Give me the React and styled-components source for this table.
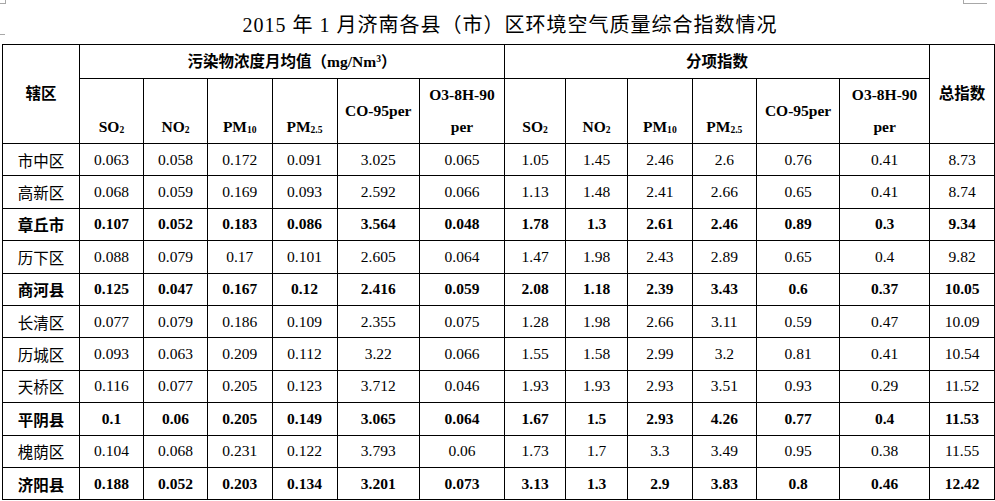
import styled, { createGlobalStyle } from "styled-components";

const GlobalStyle = createGlobalStyle`
  html, body {
    margin: 0;
    padding: 0;
    background: #fff;
  }
`;

const Page = styled.div`
  position: relative;
  width: 995px;
  height: 501px;
  padding-left: 2px;
  box-sizing: border-box;
  font-family: "Liberation Serif", "Noto Sans CJK SC", serif;
  color: #000;
`;

const CornerMark = styled.div`
  position: absolute;
  top: ${(p) => p.$top}px;
  left: ${(p) => p.$left}px;
  width: ${(p) => p.$w}px;
  height: ${(p) => p.$h}px;
  border-color: #a8a8a8;
  border-style: solid;
  border-width: ${(p) => p.$borders};
`;

const Title = styled.h1`
  margin: 0;
  height: 44px;
  padding-left: 23px;
  box-sizing: border-box;
  font-size: 20px;
  font-weight: normal;
  line-height: 51px;
  letter-spacing: 1px;
  text-align: center;
  white-space: nowrap;
`;

const Table = styled.table`
  width: 992px;
  table-layout: fixed;
  border-collapse: collapse;
  font-size: 15.5px;
`;

const HeadCell = styled.th`
  border: 1px solid #000;
  padding: 0;
  font-weight: bold;
  text-align: center;
  vertical-align: ${(p) => p.$align || "middle"};
  line-height: 32px;
  height: ${(p) => p.$h || 32}px;
  box-sizing: border-box;
`;

const Cell = styled.td`
  border: 1px solid #000;
  padding: 0;
  height: 32.4px;
  text-align: center;
  vertical-align: middle;
  font-weight: ${(p) => (p.$bold ? "bold" : "normal")};
  box-sizing: border-box;
`;

const Sub = styled.sub`
  font-size: 0.62em;
  vertical-align: -0.15em;
  line-height: 0;
`;

const Sup = styled.sup`
  font-size: 0.62em;
  vertical-align: 0.55em;
  line-height: 0;
`;

const colWidths = [77, 64, 64, 64.5, 65, 82.5, 85, 61, 62, 64.5, 64.5, 83, 90, 65];

const rows = [
  ["市中区", "0.063", "0.058", "0.172", "0.091", "3.025", "0.065", "1.05", "1.45", "2.46", "2.6", "0.76", "0.41", "8.73"],
  ["高新区", "0.068", "0.059", "0.169", "0.093", "2.592", "0.066", "1.13", "1.48", "2.41", "2.66", "0.65", "0.41", "8.74"],
  ["章丘市", "0.107", "0.052", "0.183", "0.086", "3.564", "0.048", "1.78", "1.3", "2.61", "2.46", "0.89", "0.3", "9.34", true],
  ["历下区", "0.088", "0.079", "0.17", "0.101", "2.605", "0.064", "1.47", "1.98", "2.43", "2.89", "0.65", "0.4", "9.82"],
  ["商河县", "0.125", "0.047", "0.167", "0.12", "2.416", "0.059", "2.08", "1.18", "2.39", "3.43", "0.6", "0.37", "10.05", true],
  ["长清区", "0.077", "0.079", "0.186", "0.109", "2.355", "0.075", "1.28", "1.98", "2.66", "3.11", "0.59", "0.47", "10.09"],
  ["历城区", "0.093", "0.063", "0.209", "0.112", "3.22", "0.066", "1.55", "1.58", "2.99", "3.2", "0.81", "0.41", "10.54"],
  ["天桥区", "0.116", "0.077", "0.205", "0.123", "3.712", "0.046", "1.93", "1.93", "2.93", "3.51", "0.93", "0.29", "11.52"],
  ["平阴县", "0.1", "0.06", "0.205", "0.149", "3.065", "0.064", "1.67", "1.5", "2.93", "4.26", "0.77", "0.4", "11.53", true],
  ["槐荫区", "0.104", "0.068", "0.231", "0.122", "3.793", "0.06", "1.73", "1.7", "3.3", "3.49", "0.95", "0.38", "11.55"],
  ["济阳县", "0.188", "0.052", "0.203", "0.134", "3.201", "0.073", "3.13", "1.3", "2.9", "3.83", "0.8", "0.46", "12.42", true],
];

// one set of pollutant headers, used twice
const PollutantHeads = () => (
  <>
    <HeadCell $align="bottom">
      SO<Sub>2</Sub>
    </HeadCell>
    <HeadCell $align="bottom">
      NO<Sub>2</Sub>
    </HeadCell>
    <HeadCell $align="bottom">
      PM<Sub>10</Sub>
    </HeadCell>
    <HeadCell $align="bottom">
      PM<Sub>2.5</Sub>
    </HeadCell>
    <HeadCell>CO-95per</HeadCell>
    <HeadCell>
      O3-8H-90
      <br />
      per
    </HeadCell>
  </>
);

const DataRow = ({ row }) => {
  const bold = row[14] === true;
  const cells = row.slice(0, 14);
  return (
    <tr>
      {cells.map((value, i) => (
        <Cell key={i} $bold={bold}>
          {value}
        </Cell>
      ))}
    </tr>
  );
};

const App = () => {
  return (
    <>
      <GlobalStyle />
      <Page>
        <CornerMark $top={0} $left={0} $w={5} $h={3} $borders="0 1px 1px 0" />
        <CornerMark $top={34} $left={0} $w={5} $h={3} $borders="1px 0 0 0" />
        <CornerMark $top={0} $left={963} $w={23} $h={3} $borders="0 0 1px 1px" />
        <Title>2015 年 1 月济南各县（市）区环境空气质量综合指数情况</Title>
        <Table>
          <colgroup>
            {colWidths.map((w, i) => (
              <col key={i} style={{ width: w }} />
            ))}
          </colgroup>
          <thead>
            <tr>
              <HeadCell rowSpan={2}>辖区</HeadCell>
              <HeadCell colSpan={6} $h={34}>
                污染物浓度月均值（mg/Nm<Sup>3</Sup>）
              </HeadCell>
              <HeadCell colSpan={6} $h={34}>
                分项指数
              </HeadCell>
              <HeadCell rowSpan={2}>总指数</HeadCell>
            </tr>
            <tr>
              <PollutantHeads />
              <PollutantHeads />
            </tr>
          </thead>
          <tbody>
            {rows.map((row) => (
              <DataRow key={row[0]} row={row} />
            ))}
          </tbody>
        </Table>
      </Page>
    </>
  );
};

export default App;
